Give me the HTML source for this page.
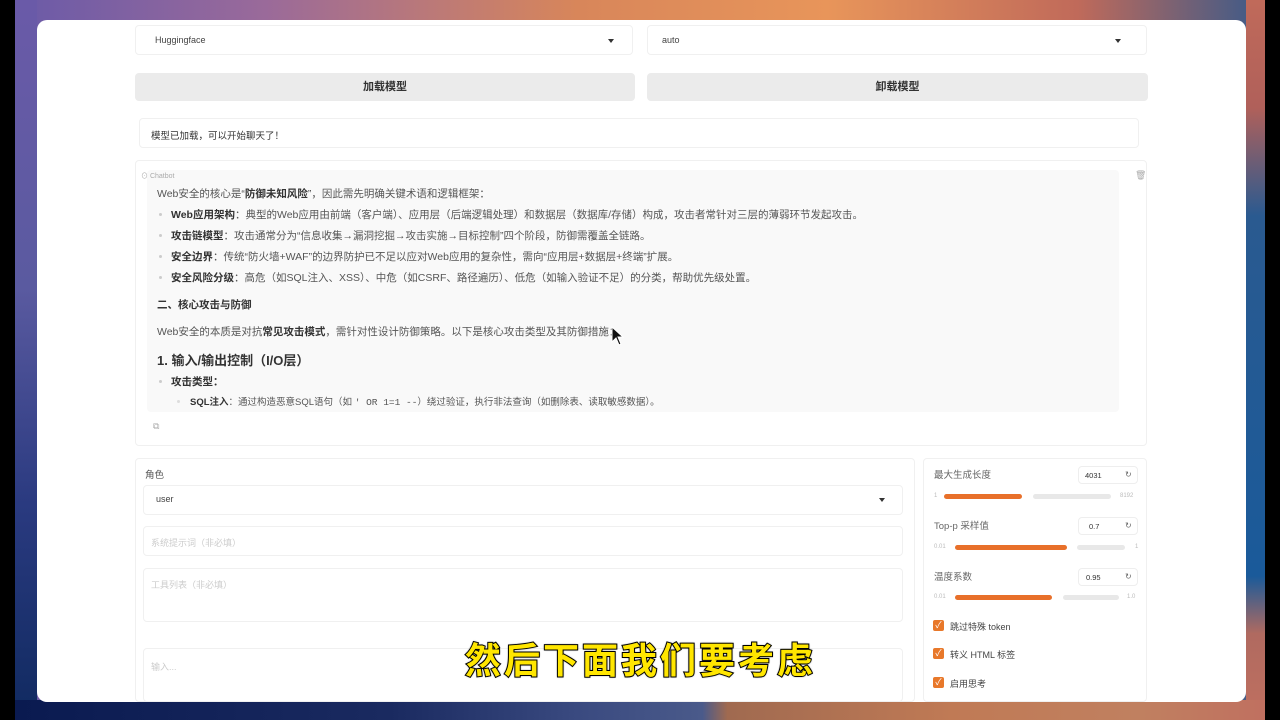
<!DOCTYPE html>
<html><head><meta charset="utf-8"><style>
*{box-sizing:border-box;margin:0;padding:0}
body{width:1280px;height:720px;overflow:hidden;position:relative;font-family:"Liberation Sans","Noto Sans CJK SC",sans-serif;background:#000}
.bg{position:absolute;left:15px;top:0;width:1250px;height:720px;background:linear-gradient(90deg,#6a5aa8 0%,#9a6a9a 20%,#d8865a 45%,#e8955a 65%,#c06a5a 85%,#3a5a8a 100%)}
.bgl{position:absolute;left:15px;top:0;width:22px;height:720px;background:linear-gradient(180deg,#6a5aa8,#5a5aa0 40%,#2a3a80 70%,#102a60)}
.bgr{position:absolute;left:1246px;top:0;width:19px;height:720px;background:linear-gradient(180deg,#c06a5a,#b0605a 15%,#2a5a90 30%,#1a5a9a 80%,#b06a60 88%,#c07060)}
.bgb{position:absolute;left:15px;top:700px;width:1250px;height:20px;background:linear-gradient(90deg,#0a1a50,#1a2a60 30%,#3a4a80 45%,#4a5a8a 55%,#a06a50 57%,#c07a55 75%,#c08060 90%,#c07060)}
.win{position:absolute;left:37px;top:20px;width:1209px;height:682px;background:#fff;border-radius:10px;overflow:hidden}
.a{position:absolute}
.box{position:absolute;border:1px solid #f0f0f0;border-radius:4px;background:#fff}
.btn{position:absolute;background:#ebebeb;border-radius:4px;font-size:11px;font-weight:bold;color:#333;text-align:center;line-height:28px}
.t{font-size:10.5px;color:#555;position:absolute;white-space:nowrap}
.b{font-weight:bold;color:#333}
.dot{position:absolute;width:3px;height:3px;border-radius:50%;background:#ccc}
.tri{position:absolute;width:0;height:0;border-left:3.5px solid transparent;border-right:3.5px solid transparent;border-top:4px solid #333}
.sl{position:absolute;height:5px;border-radius:3px}
.cb{position:absolute;width:11px;height:11px;background:#e8782a;border-radius:2px;color:#fff;font-size:9px;line-height:11px;text-align:center}
.sub{position:absolute;left:465px;top:632px;font-size:36px;font-weight:bold;color:#ffe600;letter-spacing:3px;font-family:"Noto Sans CJK SC",sans-serif;-webkit-text-stroke:2px #000;paint-order:stroke fill;text-shadow:0 0 2px #000}
</style></head><body>
<div class="bg"></div><div class="bgl"></div><div class="bgr"></div><div class="bgb"></div>
<div class="win">
 <div class="t" style="left:-12px;top:22px;font-size:16px;color:#eee">C</div>
 <div class="box" style="left:98px;top:5px;width:498px;height:30px"></div>
 <div class="t" style="left:118px;top:15px;font-size:9px;color:#444">Huggingface</div>
 <div class="tri" style="left:571px;top:19px"></div>
 <div class="box" style="left:610px;top:5px;width:500px;height:30px"></div>
 <div class="t" style="left:625px;top:15px;font-size:9px;color:#444">auto</div>
 <div class="tri" style="left:1078px;top:19px"></div>
 <div class="btn" style="left:98px;top:53px;width:500px;height:28px">加载模型</div>
 <div class="btn" style="left:610px;top:53px;width:501px;height:28px">卸载模型</div>
 <div class="box" style="left:102px;top:98px;width:1000px;height:30px"></div>
 <div class="t" style="left:114px;top:108px;font-size:9.5px;color:#333">模型已加载，可以开始聊天了！</div>
 <div class="box" style="left:98px;top:140px;width:1012px;height:286px"></div>
 <div class="a" style="left:110px;top:150px;width:972px;height:242px;background:#f9f9f9;border-radius:4px"></div>
 <div class="t" style="left:104px;top:151px;font-size:7px;color:#aaa">⊙ Chatbot</div>
 <div class="t" style="left:1098px;top:150px;font-size:9px;color:#aaa">🗑</div>
 <div class="t" style="left:120px;top:166px">Web安全的核心是“<span class="b">防御未知风险</span>”，因此需先明确关键术语和逻辑框架：</div>
 <div class="dot" style="left:122px;top:193px"></div>
 <div class="t" style="left:134px;top:187px"><span class="b">Web应用架构</span>：典型的Web应用由前端（客户端）、应用层（后端逻辑处理）和数据层（数据库/存储）构成，攻击者常针对三层的薄弱环节发起攻击。</div>
 <div class="dot" style="left:122px;top:214px"></div>
 <div class="t" style="left:134px;top:208px"><span class="b">攻击链模型</span>：攻击通常分为“信息收集→漏洞挖掘→攻击实施→目标控制”四个阶段，防御需覆盖全链路。</div>
 <div class="dot" style="left:122px;top:235px"></div>
 <div class="t" style="left:134px;top:229px"><span class="b">安全边界</span>：传统“防火墙+WAF”的边界防护已不足以应对Web应用的复杂性，需向“应用层+数据层+终端”扩展。</div>
 <div class="dot" style="left:122px;top:256px"></div>
 <div class="t" style="left:134px;top:250px"><span class="b">安全风险分级</span>：高危（如SQL注入、XSS）、中危（如CSRF、路径遍历）、低危（如输入验证不足）的分类，帮助优先级处置。</div>
 <div class="t b" style="left:120px;top:277px">二、核心攻击与防御</div>
 <div class="t" style="left:120px;top:304px">Web安全的本质是对抗<span class="b">常见攻击模式</span>，需针对性设计防御策略。以下是核心攻击类型及其防御措施：</div>
 <div class="t b" style="left:120px;top:330px;font-size:13px">1. 输入/输出控制（I/O层）</div>
 <div class="dot" style="left:122px;top:360px"></div>
 <div class="t b" style="left:134px;top:354px">攻击类型：</div>
 <div class="dot" style="left:140px;top:380px;background:#ddd"></div>
 <div class="t" style="left:153px;top:374px;font-size:9.5px"><span class="b">SQL注入</span>：通过构造恶意SQL语句（如 <span style="font-family:'Liberation Mono',monospace">' OR 1=1 --</span>）绕过验证，执行非法查询（如删除表、读取敏感数据）。</div>
 <svg class="a" style="left:574px;top:306px" width="14" height="20"><path d="M1 1 L1 16 L5 12 L8 19 L10 18 L7 11 L12 11 Z" fill="#111" stroke="#fff" stroke-width="1"/></svg>
 <div class="t" style="left:116px;top:401px;font-size:9px;color:#aaa">⧉</div>
 <div class="box" style="left:98px;top:438px;width:780px;height:244px"></div>
 <div class="t" style="left:108px;top:447px;font-size:9.5px;color:#555">角色</div>
 <div class="box" style="left:106px;top:465px;width:760px;height:30px"></div>
 <div class="t" style="left:119px;top:474px;font-size:9px;color:#444">user</div>
 <div class="tri" style="left:842px;top:478px"></div>
 <div class="box" style="left:106px;top:506px;width:760px;height:30px"></div>
 <div class="t" style="left:114px;top:516px;font-size:9px;color:#ccc">系统提示词（非必填）</div>
 <div class="box" style="left:106px;top:548px;width:760px;height:54px"></div>
 <div class="t" style="left:114px;top:558px;font-size:9px;color:#ccc">工具列表（非必填）</div>
 <div class="box" style="left:106px;top:628px;width:760px;height:54px"></div>
 <div class="t" style="left:114px;top:640px;font-size:9px;color:#ccc">输入...</div>
 <div class="box" style="left:886px;top:438px;width:224px;height:244px"></div>
 <div class="t" style="left:897px;top:447px;font-size:9.5px;color:#666">最大生成长度</div>
 <div class="box" style="left:1041px;top:446px;width:60px;height:18px;border-color:#eee"></div>
 <div class="t" style="left:1048px;top:451px;font-size:7.5px;color:#333">4031</div>
 <div class="t" style="left:1088px;top:450px;font-size:8px;color:#666">↻</div>
 <div class="t" style="left:897px;top:473px;font-size:6px;color:#bbb">1</div>
 <div class="sl" style="left:907px;top:474px;width:78px;background:#e8702a"></div>
 <div class="sl" style="left:996px;top:474px;width:78px;background:#e8e8e8"></div>
 <div class="t" style="left:1083px;top:473px;font-size:6px;color:#bbb">8192</div>
 <div class="t" style="left:897px;top:498px;font-size:9.5px;color:#666">Top-p 采样值</div>
 <div class="box" style="left:1041px;top:497px;width:60px;height:18px;border-color:#eee"></div>
 <div class="t" style="left:1052px;top:502px;font-size:7.5px;color:#333">0.7</div>
 <div class="t" style="left:1088px;top:501px;font-size:8px;color:#666">↻</div>
 <div class="t" style="left:897px;top:524px;font-size:6px;color:#bbb">0.01</div>
 <div class="sl" style="left:918px;top:525px;width:112px;background:#e8702a"></div>
 <div class="sl" style="left:1040px;top:525px;width:48px;background:#e8e8e8"></div>
 <div class="t" style="left:1098px;top:524px;font-size:6px;color:#bbb">1</div>
 <div class="t" style="left:897px;top:549px;font-size:9.5px;color:#666">温度系数</div>
 <div class="box" style="left:1041px;top:548px;width:60px;height:18px;border-color:#eee"></div>
 <div class="t" style="left:1049px;top:553px;font-size:7.5px;color:#333">0.95</div>
 <div class="t" style="left:1088px;top:552px;font-size:8px;color:#666">↻</div>
 <div class="t" style="left:897px;top:574px;font-size:6px;color:#bbb">0.01</div>
 <div class="sl" style="left:918px;top:575px;width:97px;background:#e8702a"></div>
 <div class="sl" style="left:1026px;top:575px;width:56px;background:#e8e8e8"></div>
 <div class="t" style="left:1090px;top:574px;font-size:6px;color:#bbb">1.0</div>
 <div class="cb" style="left:896px;top:600px">✓</div>
 <div class="t" style="left:913px;top:600px;font-size:9px;color:#444">跳过特殊 token</div>
 <div class="cb" style="left:896px;top:628px">✓</div>
 <div class="t" style="left:913px;top:628px;font-size:9px;color:#444">转义 HTML 标签</div>
 <div class="cb" style="left:896px;top:657px">✓</div>
 <div class="t" style="left:913px;top:657px;font-size:9px;color:#444">启用思考</div>
</div>
<div class="sub">然后下面我们要考虑</div>
</body></html>
